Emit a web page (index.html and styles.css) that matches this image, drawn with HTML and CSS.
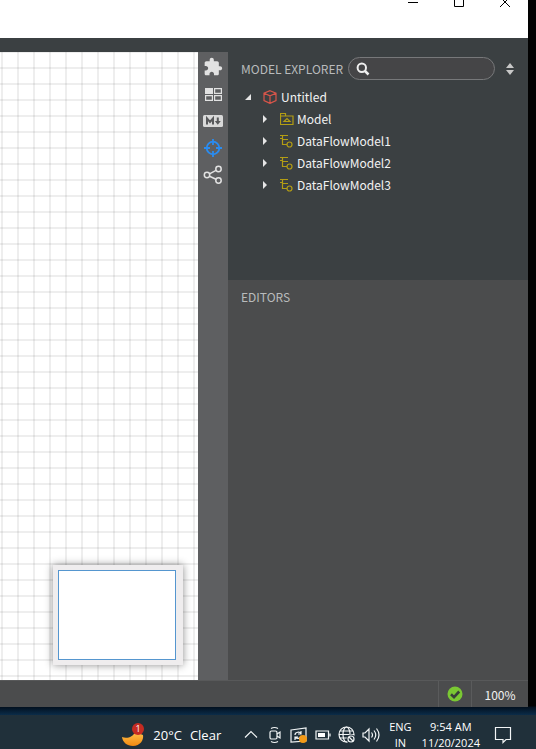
FILE: index.html
```html
<!DOCTYPE html>
<html lang="en">
<head>
<meta charset="utf-8">
<title>Untitled</title>
<link rel="stylesheet" href="styles.css">
</head>
<body>
<div class="desktop">
  <div class="window">
    <header class="titlebar">
      <button class="win-btn" aria-label="Minimize"><svg width="12" height="12" viewBox="0 0 12 12"><path d="M1 7.500h10"/></svg></button>
      <button class="win-btn" aria-label="Maximize"><svg width="12" height="12" viewBox="0 0 12 12"><path d="M1.500 2.500h9v9h-9z"/></svg></button>
      <button class="win-btn" aria-label="Close"><svg width="12" height="12" viewBox="0 0 12 12"><path d="M1 2l10 10M11 2L1 12"/></svg></button>
    </header>
    <div class="toolbar"></div>
    <main class="workspace">
      <section class="canvas">
        <div class="minimap"><div class="minimap-view"></div></div>
      </section>
      <nav class="rail">
        <button aria-label="Extensions"><svg width="20" height="20" viewBox="0 0 24 24"><path fill="#e2e2e2" d="M20.500 11H19V7c0-1.100-.9-2-2-2h-4V3.500C13 2.120 11.880 1 10.500 1S8 2.120 8 3.500V5H4c-1.100 0-1.990.9-1.990 2v3.800H3.500c1.490 0 2.700 1.210 2.700 2.700s-1.210 2.700-2.700 2.700H2V20c0 1.100.9 2 2 2h3.800v-1.500c0-1.490 1.210-2.700 2.700-2.700 1.490 0 2.700 1.210 2.700 2.700V22H17c1.100 0 2-.9 2-2v-4h1.500c1.380 0 2.500-1.120 2.500-2.500S21.880 11 20.500 11z"/></svg></button>
        <button aria-label="Views"><svg width="20" height="20" viewBox="0 0 20 20" fill="none" stroke="#e2e2e2"><path fill="#e2e2e2" stroke="none" d="M2 4h8v6H2z"/><path stroke-width="1.200" d="M11.600 4.600h6.800v4.800h-6.800zM2.600 11.600h6.800v4.800H2.600zM11.600 11.600h6.800v4.800h-6.800z"/></svg></button>
        <button aria-label="Markdown"><svg width="20" height="20" viewBox="0 0 20 20"><rect y="4" width="20" height="12" rx="1.500" fill="#d9d9d9"/><path d="M4 13.500V7.500l3 3.500 3-3.500v6M14.800 6.500V11" fill="none" stroke="#58595b" stroke-width="2"/><path d="M11.800 10h6l-3 3.700z" fill="#58595b"/></svg></button>
        <button aria-label="Navigator"><svg width="20" height="20" viewBox="0 0 20 20" fill="none" stroke="#2a8cf0" stroke-width="1.800"><circle cx="10" cy="10" r="6.300"/><path d="M10 1v6M10 13v6M1 10h6M13 10h6"/></svg></button>
        <button aria-label="Relationships"><svg width="20" height="20" viewBox="0 0 20 20" fill="none" stroke="#e2e2e2" stroke-width="1.500"><circle cx="4" cy="10" r="2.700"/><circle cx="15.500" cy="4" r="2.700"/><circle cx="15.500" cy="15.500" r="2.700"/><path d="M6.500 8.800l6.500-3.500M6.500 11.200l6.500 3.100"/></svg></button>
      </nav>
      <aside class="side">
        <section class="explorer">
          <div class="explorer-head">
            <h2>MODEL EXPLORER</h2>
            <label class="search">
              <svg width="14" height="14" viewBox="0 0 14 14" fill="none" stroke="#efefef"><circle cx="5.800" cy="5.800" r="4.200" stroke-width="2"/><path d="M9 9l3.500 3.500" stroke-width="2.500"/></svg>
              <input type="text" aria-label="Search model">
            </label>
            <button class="sort" aria-label="Sort"><svg width="8" height="12" viewBox="0 0 8 12" fill="#c8c8c8"><path d="M0 5L4 0l4 5zM0 7h8l-4 5z"/></svg></button>
          </div>
          <ul class="tree">
            <li><svg class="arrow" width="8" height="8" viewBox="0 0 8 8"><path d="M7 1v6H1z"/></svg><svg class="icon project" width="14" height="14" viewBox="0 0 14 14"><path d="M7 .7l6 2.500v7.300L7 13.400 1 10.500V3.200zM1 3.200l6 2.600 6-2.600M7 5.800v7.600"/></svg><span>Untitled</span></li>
            <li class="child"><svg class="arrow" width="8" height="8" viewBox="0 0 8 8"><path d="M2 0l4 4-4 4z"/></svg><svg class="icon" width="14" height="14" viewBox="0 0 14 14"><path d="M.5 12.500v-11h5v2.500h7.500v8.500zM1 4h5M4 9.500l3-3 3 3z"/></svg><span>Model</span></li>
            <li class="child"><svg class="arrow" width="8" height="8" viewBox="0 0 8 8"><path d="M2 0l4 4-4 4z"/></svg><svg class="icon" width="14" height="14" viewBox="0 0 14 14"><path d="M0 1.500h8M2.500 1.500v9h4.500M2.500 5.500h5.500M0 4.500h2"/><circle cx="9.500" cy="10.500" r="2.500"/></svg><span>DataFlowModel1</span></li>
            <li class="child"><svg class="arrow" width="8" height="8" viewBox="0 0 8 8"><path d="M2 0l4 4-4 4z"/></svg><svg class="icon" width="14" height="14" viewBox="0 0 14 14"><path d="M0 1.500h8M2.500 1.500v9h4.500M2.500 5.500h5.500M0 4.500h2"/><circle cx="9.500" cy="10.500" r="2.500"/></svg><span>DataFlowModel2</span></li>
            <li class="child"><svg class="arrow" width="8" height="8" viewBox="0 0 8 8"><path d="M2 0l4 4-4 4z"/></svg><svg class="icon" width="14" height="14" viewBox="0 0 14 14"><path d="M0 1.500h8M2.500 1.500v9h4.500M2.500 5.500h5.500M0 4.500h2"/><circle cx="9.500" cy="10.500" r="2.500"/></svg><span>DataFlowModel3</span></li>
          </ul>
        </section>
        <section class="editors"><h2>EDITORS</h2></section>
      </aside>
    </main>
    <footer class="status">
      <div class="status-cell check"><svg width="16" height="16" viewBox="0 0 16 16"><circle cx="8" cy="8" r="7.500" fill="#7ac833"/><path d="M4 8.300l3 2.900 5.200-5.700" fill="none" stroke="#38403a" stroke-width="2.600"/></svg></div>
      <div class="status-cell zoom">100%</div>
    </footer>
  </div>
</div>
<footer class="taskbar">
  <div class="weather">
    <svg width="26" height="26" viewBox="0 0 26 26"><defs><linearGradient id="moon" x1="0" y1="0" x2="0" y2="1"><stop offset="0" stop-color="#ffc14a"/><stop offset="1" stop-color="#f28a12"/></linearGradient></defs><path d="M1 15c5 2 11 0 13-5l8 3c1 5-3 11-10 11C6 24 1.500 20 1 15z" fill="url(#moon)"/><circle cx="17" cy="7" r="6" fill="#c42b22"/><text x="17" y="10" text-anchor="middle" class="badge">1</text></svg>
    <span>20°C</span><span>Clear</span>
  </div>
  <div class="tray">
    <svg width="14" height="20" viewBox="0 0 14 20"><path d="M1 12.500l6-6 6 6"/></svg>
    <svg width="14" height="20" viewBox="0 0 14 20"><rect x="2" y="6" width="7" height="8" rx="1.500"/><path d="M9 9l3-2v6l-3-2M3 3.500q3.500-2 7 0M3 16.500q3.500 2 7 0"/></svg>
    <svg width="18" height="20" viewBox="0 0 18 20"><path d="M1 5l15-2v13l-15 1zM5 10c0-3 5-4 6-1M11 6v3H8M11 11c-1 3-4 3-6 1M5 15v-3h3"/><circle cx="13" cy="14" r="4" fill="#f39a18" stroke="none"/></svg>
    <svg width="16" height="20" viewBox="0 0 16 20"><path d="M1 6h12.500v8H1zM15 8.500v3"/><path d="M3 8h7v4H3z" fill="#fff" stroke="none"/></svg>
    <svg width="18" height="20" viewBox="0 0 18 20"><circle cx="8.500" cy="9.500" r="7.500"/><ellipse cx="8.500" cy="9.500" rx="3.500" ry="7.500"/><path d="M1 9.500h15M2 6h13M2 13h8"/><circle cx="13" cy="14" r="4.500" fill="#20303a" stroke="none"/><circle cx="13" cy="14" r="3"/><path d="M11 12l4 4"/></svg>
    <svg width="18" height="20" viewBox="0 0 18 20"><path d="M1 8h2l4-4v12l-4-4H1zM9.500 7.500q2 2.500 0 5M12 5.500q3.500 4.500 0 9M14.500 3.500q5 6.500 0 13"/></svg>
  </div>
  <div class="lang"><span>ENG</span><span>IN</span></div>
  <div class="clock"><span>9:54 AM</span><span>11/20/2024</span></div>
  <button class="notify" aria-label="Notifications"><svg width="18" height="18" viewBox="0 0 18 18"><path d="M1.500 1.500h15v12H12l-3 3v-3H1.500z"/></svg></button>
</footer>
</body>
</html>
```
FILE: styles.css
```css
* { box-sizing: border-box; }
body {
  margin: 0;
  height: 100vh;
  display: flex;
  flex-direction: column;
  overflow: hidden;
  background: #000;
  color: #f2f2f2;
  font-family: "Noto Sans CJK SC", "Noto Sans", sans-serif;
  font-size: 12px;
}
button { padding: 0; border: 0; background: none; display: block; }
svg { display: block; flex: none; }
h2 { margin: 0; font-size: 12px; line-height: 20px; font-weight: 400; color: #b9bbbc; white-space: nowrap; }

.desktop {
  flex: 1;
  min-height: 0;
  display: flex;
  padding: 0 8px 8px 0;
  background: linear-gradient(to top, #0b2c49, #02101f 8px, #020202 9px);
}
.window { flex: 1; min-width: 0; display: flex; flex-direction: column; background: #4b4c4d; }

.titlebar { height: 38px; background: #fff; display: flex; justify-content: flex-end; align-items: flex-start; overflow: hidden; }
.win-btn { width: 46px; height: 28px; display: flex; justify-content: center; margin-top: -5px; }
.win-btn svg { fill: none; stroke: #000; }
.toolbar { height: 14px; background: #3b4042; }

.workspace { flex: 1; min-height: 0; display: flex; }
.canvas {
  flex: 1;
  min-width: 0;
  display: flex;
  justify-content: flex-end;
  align-items: flex-end;
  padding: 15px;
  background-color: #fff;
  background-image:
    linear-gradient(to right, rgba(0, 0, 0, .065) 2px, transparent 2px),
    linear-gradient(to bottom, rgba(0, 0, 0, .065) 2px, transparent 2px);
  background-size: 16px 16px;
  background-position: 1px 15px;
}
.minimap { width: 130px; height: 100px; padding: 5px 7px 5px 5px; background: #efedee; box-shadow: 0 0 8px rgba(0, 0, 0, .45); }
.minimap-view { height: 100%; border: 1px solid #5596cf; background: #fff; }

.rail { width: 30px; background: #5e5f61; display: flex; flex-direction: column; align-items: center; gap: 7px; padding-top: 5px; }

.side { width: 300px; display: flex; flex-direction: column; }
.explorer { height: 228px; background: #3b4042; }
.explorer-head { display: flex; align-items: center; padding: 5px 14px 0 13px; gap: 5px; }
.search { flex: 1; min-width: 0; height: 23px; display: flex; align-items: center; padding: 0 7px; border: 1px solid #77787a; border-radius: 12px; background: #454547; }
.search input { flex: 1; min-width: 0; border: 0; background: none; color: #eee; outline: 0; font: inherit; }
.sort { margin-left: 6px; }
.tree { list-style: none; margin: 0; padding: 6px 0 0 16px; }
.tree li { height: 22px; line-height: 22px; display: flex; align-items: center; }
.tree .child { padding-left: 17px; }
.arrow { fill: #e6e6e6; margin-right: 11px; }
.icon { fill: none; stroke: #b39d14; stroke-width: 1.2; margin-right: 4px; }
.icon.project { stroke: #d8554a; }
.child .icon { margin-right: 3px; }
.editors { flex: 1; padding: 7px 13px; background: #4b4c4d; }

.status { height: 27px; display: flex; justify-content: flex-end; border-top: 1px solid #58595a; background: #4b4c4d; }
.status-cell { display: flex; align-items: center; justify-content: center; border-left: 1px solid #5a5b5c; }
.check { width: 33px; }
.zoom { width: 57px; }

.taskbar {
  height: 34px;
  flex: none;
  display: flex;
  align-items: flex-start;
  justify-content: flex-end;
  overflow: hidden;
  background: #20303a;
  color: #fff;
  font-family: "Open Sans", "Noto Sans", sans-serif;
  font-size: 11px;
}
.weather { display: flex; align-items: center; gap: 8px; padding-top: 7px; margin-right: 18px; font-size: 13px; line-height: 26px; }
.weather svg { margin-right: -2px; }
.badge { font-size: 9px; fill: #fff; }
.tray { display: grid; grid-template-columns: repeat(6, 24px); justify-items: center; padding-top: 10px; }
.tray svg, .notify svg { fill: none; stroke: #f2f5f6; stroke-width: 1.2; }
.lang, .clock { display: flex; flex-direction: column; align-items: center; gap: 3px; line-height: 13px; padding-top: 5px; white-space: nowrap; }
.lang { margin-left: 6px; }
.clock { margin-left: 10px; }
.notify { margin: 11px 24px 0 14px; }
```
